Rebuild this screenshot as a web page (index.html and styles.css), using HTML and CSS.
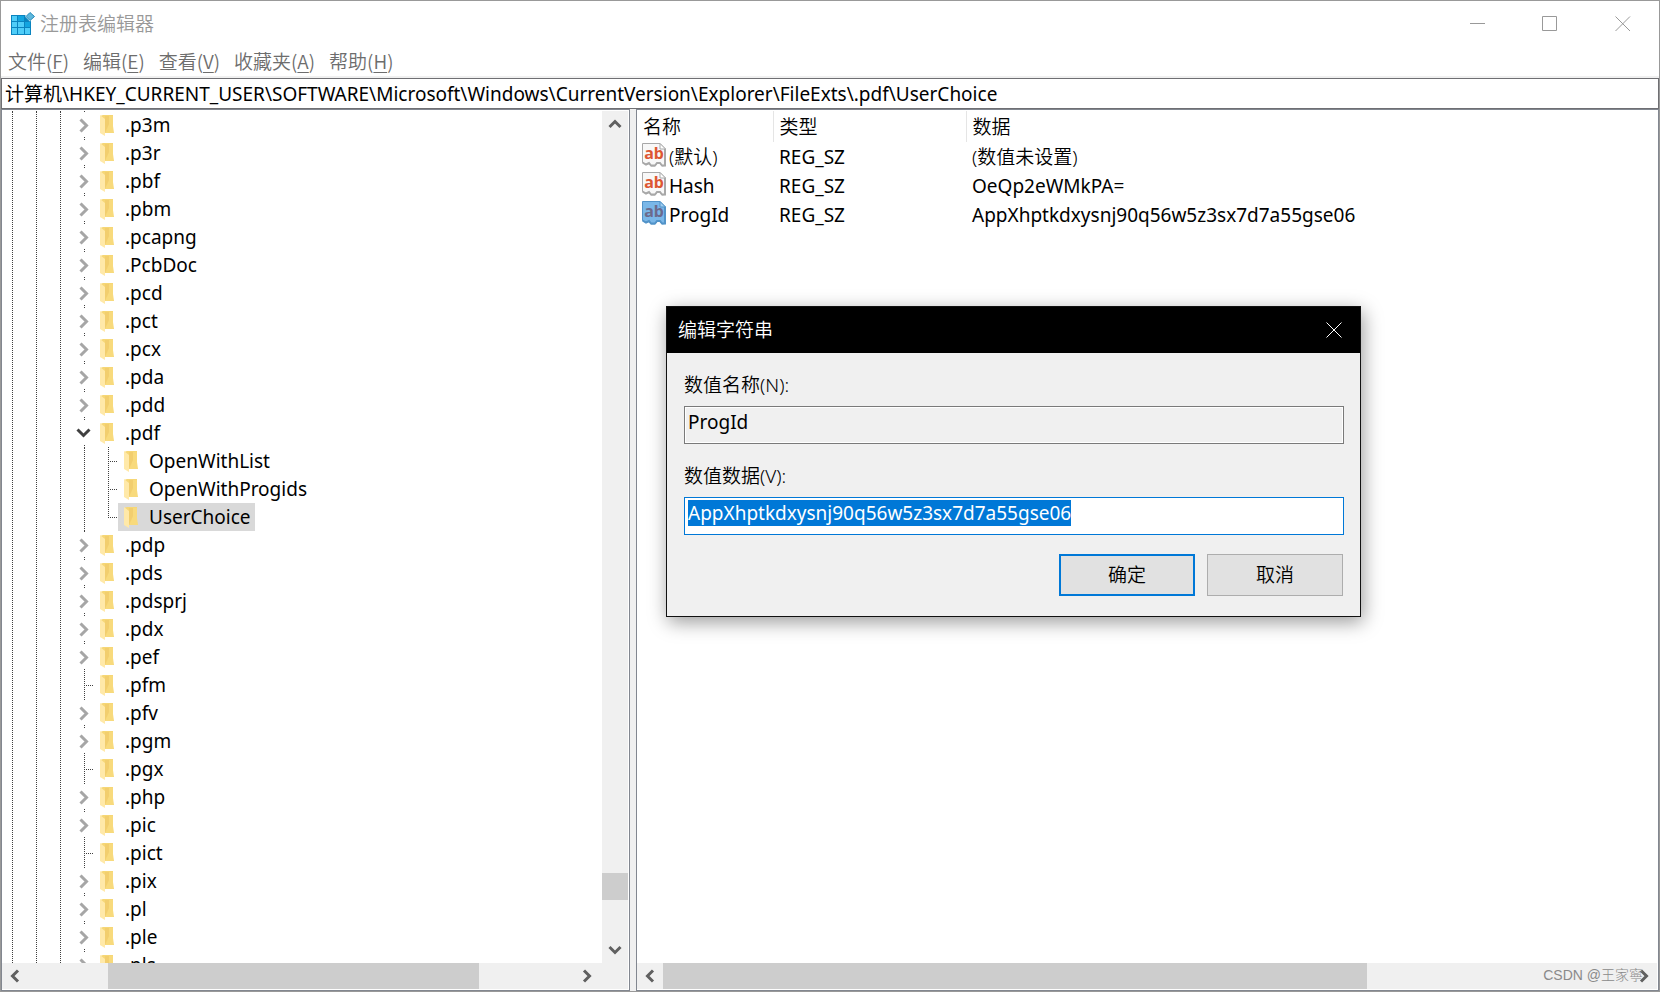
FILE: index.html
```html
<!DOCTYPE html>
<html lang="zh-CN">
<head>
<meta charset="utf-8">
<title>注册表编辑器</title>
<link rel="stylesheet" href="styles.css">
</head>
<body>
<svg class="defs" aria-hidden="true">
  <symbol id="folder" viewBox="0 0 14 22">
    <path d="M3 0H13V17L14 18H4L0 15V1Z" fill="#f6d776"/>
    <path d="M5 1H13V11L14 18H5Z" fill="#f8da7c"/>
    <path d="M5 1V18L9 9V1Z" fill="#eec765" opacity=".6"/>
    <path d="M0 0L5 4V21L0 18Z" fill="#ffe9a9"/>
  </symbol>
  <symbol id="closed" viewBox="0 0 22 28">
    <path d="M12.500 0V1M12.500 26V27" class="dots"/>
    <path d="M8.500 8.500L14.500 14.500L8.500 20.500" fill="none" stroke="#a6a6a6" stroke-width="3"/>
  </symbol>
  <symbol id="open" viewBox="0 0 22 28">
    <path d="M12.500 0V1M12.500 26V27" class="dots"/>
    <path d="M5.500 10.500L11.500 16.500L17.500 10.500" fill="none" stroke="#404040" stroke-width="3"/>
  </symbol>
  <symbol id="leaf" viewBox="0 0 22 28"><path d="M12.500 0V28M12 14.500H22" class="dots"/></symbol>
  <symbol id="last" viewBox="0 0 22 28"><path d="M12.500 0V15M12 14.500H22" class="dots"/></symbol>
  <symbol id="string" viewBox="0 0 24 24">
    <path class="sheet" d="M.5 .5H18L23.500 6V22.500L20 23L18 20.500H15L13 23H9L7 20.500L4 21.500L.5 19.500Z"/>
    <path class="edge" d="M.5 19.500L4 21.500L7 20L9 22.500H13L15 20H18L20 22.500H23V6"/>
    <path class="fold" d="M18 .5V6H23.500Z"/>
  </symbol>
  <symbol id="arrow" viewBox="0 0 26 26"><path d="M16 7.500L10.500 13L16 18.500" fill="none" stroke="#606060" stroke-width="3"/></symbol>
</svg>
<div class="window">
  <header class="titlebar">
    <svg class="app-icon" viewBox="0 0 24 24" aria-hidden="true">
      <path d="M0 3H14L20 9V23H0Z" fill="#0a84bf"/>
      <path d="M1 4H6V9H1ZM1 10H6V15H1ZM1 16H6V22H1ZM7 16H13V22H7ZM14 16H19V22H14ZM7 10H13V15H7Z" fill="#4fcdf8"/>
      <path d="M7 4H13V9H7ZM14 10H19V15H14Z" fill="#12a5e0"/>
      <path d="M19 -.5L24 4.500L19 9.500L14 4.500Z" fill="#fff"/>
      <path d="M19 .5L23.500 4.500L19 8.500L15 4.500Z" fill="#5fb8dd" stroke="#2389b9"/>
    </svg>
    <h1>注册表编辑器</h1>
    <div class="caption-buttons">
      <button aria-label="最小化"><svg viewBox="0 0 16 16"><path d="M1 7.500H16"/></svg></button>
      <button aria-label="最大化"><svg viewBox="0 0 16 16"><path d="M.5 .5H14.500V14.500H.5Z"/></svg></button>
      <button aria-label="关闭"><svg viewBox="0 0 16 16"><path d="M.5 .5L15 15M15 .5L.5 15"/></svg></button>
    </div>
  </header>
  <nav class="menu">
    <button>文件(<u>F</u>)</button><button>编辑(<u>E</u>)</button><button>查看(<u>V</u>)</button><button>收藏夹(<u>A</u>)</button><button>帮助(<u>H</u>)</button>
  </nav>
  <input class="address" aria-label="地址" value="计算机\HKEY_CURRENT_USER\SOFTWARE\Microsoft\Windows\CurrentVersion\Explorer\FileExts\.pdf\UserChoice">
  <main class="panes">
    <section class="pane tree-pane">
      <div class="tree-area">
        <div class="tree">
          <div class="guide"></div><div class="guide"></div><div class="guide half"></div>
          <ul>
            <li><svg class="toggle"><use href="#closed"/></svg><span class="item"><svg class="folder"><use href="#folder"/></svg>.p3m</span></li>
            <li><svg class="toggle"><use href="#closed"/></svg><span class="item"><svg class="folder"><use href="#folder"/></svg>.p3r</span></li>
            <li><svg class="toggle"><use href="#closed"/></svg><span class="item"><svg class="folder"><use href="#folder"/></svg>.pbf</span></li>
            <li><svg class="toggle"><use href="#closed"/></svg><span class="item"><svg class="folder"><use href="#folder"/></svg>.pbm</span></li>
            <li><svg class="toggle"><use href="#closed"/></svg><span class="item"><svg class="folder"><use href="#folder"/></svg>.pcapng</span></li>
            <li><svg class="toggle"><use href="#closed"/></svg><span class="item"><svg class="folder"><use href="#folder"/></svg>.PcbDoc</span></li>
            <li><svg class="toggle"><use href="#closed"/></svg><span class="item"><svg class="folder"><use href="#folder"/></svg>.pcd</span></li>
            <li><svg class="toggle"><use href="#closed"/></svg><span class="item"><svg class="folder"><use href="#folder"/></svg>.pct</span></li>
            <li><svg class="toggle"><use href="#closed"/></svg><span class="item"><svg class="folder"><use href="#folder"/></svg>.pcx</span></li>
            <li><svg class="toggle"><use href="#closed"/></svg><span class="item"><svg class="folder"><use href="#folder"/></svg>.pda</span></li>
            <li><svg class="toggle"><use href="#closed"/></svg><span class="item"><svg class="folder"><use href="#folder"/></svg>.pdd</span></li>
            <li><svg class="toggle"><use href="#open"/></svg><span class="item"><svg class="folder"><use href="#folder"/></svg>.pdf</span>
              <div class="children"><div class="guide"></div>
                <ul>
                  <li><svg class="toggle"><use href="#leaf"/></svg><span class="item"><svg class="folder"><use href="#folder"/></svg>OpenWithList</span></li>
                  <li><svg class="toggle"><use href="#leaf"/></svg><span class="item"><svg class="folder"><use href="#folder"/></svg>OpenWithProgids</span></li>
                  <li><svg class="toggle"><use href="#last"/></svg><span class="item selected"><svg class="folder"><use href="#folder"/></svg>UserChoice</span></li>
                </ul>
              </div>
            </li>
            <li><svg class="toggle"><use href="#closed"/></svg><span class="item"><svg class="folder"><use href="#folder"/></svg>.pdp</span></li>
            <li><svg class="toggle"><use href="#closed"/></svg><span class="item"><svg class="folder"><use href="#folder"/></svg>.pds</span></li>
            <li><svg class="toggle"><use href="#closed"/></svg><span class="item"><svg class="folder"><use href="#folder"/></svg>.pdsprj</span></li>
            <li><svg class="toggle"><use href="#closed"/></svg><span class="item"><svg class="folder"><use href="#folder"/></svg>.pdx</span></li>
            <li><svg class="toggle"><use href="#closed"/></svg><span class="item"><svg class="folder"><use href="#folder"/></svg>.pef</span></li>
            <li><svg class="toggle"><use href="#leaf"/></svg><span class="item"><svg class="folder"><use href="#folder"/></svg>.pfm</span></li>
            <li><svg class="toggle"><use href="#closed"/></svg><span class="item"><svg class="folder"><use href="#folder"/></svg>.pfv</span></li>
            <li><svg class="toggle"><use href="#closed"/></svg><span class="item"><svg class="folder"><use href="#folder"/></svg>.pgm</span></li>
            <li><svg class="toggle"><use href="#leaf"/></svg><span class="item"><svg class="folder"><use href="#folder"/></svg>.pgx</span></li>
            <li><svg class="toggle"><use href="#closed"/></svg><span class="item"><svg class="folder"><use href="#folder"/></svg>.php</span></li>
            <li><svg class="toggle"><use href="#closed"/></svg><span class="item"><svg class="folder"><use href="#folder"/></svg>.pic</span></li>
            <li><svg class="toggle"><use href="#leaf"/></svg><span class="item"><svg class="folder"><use href="#folder"/></svg>.pict</span></li>
            <li><svg class="toggle"><use href="#closed"/></svg><span class="item"><svg class="folder"><use href="#folder"/></svg>.pix</span></li>
            <li><svg class="toggle"><use href="#closed"/></svg><span class="item"><svg class="folder"><use href="#folder"/></svg>.pl</span></li>
            <li><svg class="toggle"><use href="#closed"/></svg><span class="item"><svg class="folder"><use href="#folder"/></svg>.ple</span></li>
            <li><svg class="toggle"><use href="#closed"/></svg><span class="item"><svg class="folder"><use href="#folder"/></svg>.pls</span></li>
          </ul>
        </div>
        <div class="scroll vertical">
          <button aria-label="向上滚动"><svg class="up"><use href="#arrow"/></svg></button>
          <div class="track tree-v"><i></i><b></b><i></i></div>
          <button aria-label="向下滚动"><svg class="down"><use href="#arrow"/></svg></button>
        </div>
      </div>
      <div class="scroll horizontal with-corner">
        <button aria-label="向左滚动"><svg><use href="#arrow"/></svg></button>
        <div class="track tree-h"><i></i><b></b><i></i></div>
        <button aria-label="向右滚动"><svg class="right"><use href="#arrow"/></svg></button>
      </div>
    </section>
    <section class="pane list-pane">
      <table class="values">
        <colgroup><col class="c-name"><col class="c-type"><col></colgroup>
        <thead><tr><th>名称</th><th>类型</th><th>数据</th></tr></thead>
        <tbody>
          <tr><td class="thin"><span class="value"><span class="value-icon"><svg><use href="#string"/></svg><span>ab</span></span>(默认)</span></td><td>REG_SZ</td><td class="thin">(数值未设置)</td></tr>
          <tr><td><span class="value"><span class="value-icon"><svg><use href="#string"/></svg><span>ab</span></span>Hash</span></td><td>REG_SZ</td><td>OeQp2eWMkPA=</td></tr>
          <tr><td><span class="value"><span class="value-icon picked"><svg><use href="#string"/></svg><span>ab</span></span>ProgId</span></td><td>REG_SZ</td><td>AppXhptkdxysnj90q56w5z3sx7d7a55gse06</td></tr>
        </tbody>
      </table>
      <div class="scroll horizontal">
        <button aria-label="向左滚动"><svg><use href="#arrow"/></svg></button>
        <div class="track list-h"><b></b><i></i></div>
        <button aria-label="向右滚动"><svg class="right"><use href="#arrow"/></svg></button>
      </div>
    </section>
  </main>
</div>
<form class="dialog" role="dialog" aria-labelledby="dialog-title">
  <header class="dialog-title">
    <h2 id="dialog-title">编辑字符串</h2>
    <button type="button" aria-label="关闭"><svg viewBox="0 0 16 16"><path d="M.5 .5L15.500 15.500M15.500 .5L.5 15.500"/></svg></button>
  </header>
  <div class="dialog-body">
    <label for="value-name">数值名称(N):</label>
    <input id="value-name" class="readonly" value="ProgId" readonly>
    <label for="value-data">数值数据(V):</label>
    <input id="value-data" value="AppXhptkdxysnj90q56w5z3sx7d7a55gse06" spellcheck="false">
    <div class="actions"><button type="button" class="default">确定</button><button type="button">取消</button></div>
  </div>
</form>
<div class="watermark">CSDN @王家寧</div>
<script src="main.js"></script>
</body>
</html>
```
FILE: main.js
```js
const field = document.getElementById('value-data');
field.focus();
field.select();
```
FILE: styles.css
```css
* { box-sizing: border-box; }
body {
  margin: 0;
  background: #fff;
  color: #000;
  font-family: "Noto Sans", "Noto Sans CJK SC", sans-serif;
  font-size: 19px;
  line-height: 28px;
}
button, input { font: inherit; color: inherit; margin: 0; border-radius: 0; outline: none; }
button { background: none; border: 0; padding: 0; }
h1, h2 { margin: 0; font-size: 19px; font-weight: 350; }
ul { list-style: none; margin: 0; padding: 0; }
svg { display: block; }
.defs { position: absolute; width: 0; height: 0; }

.window {
  height: 100vh;
  display: flex;
  flex-direction: column;
  border: 1px solid #999;
  overflow: hidden;
}
.titlebar { display: flex; align-items: center; height: 46px; padding-left: 10px; color: #999; }
.app-icon { width: 24px; height: 24px; margin-right: 5px; }
.caption-buttons { margin-left: auto; display: flex; }
.caption-buttons button { width: 73px; height: 46px; display: grid; place-items: center; }
.caption-buttons svg, .dialog-title svg { width: 16px; height: 16px; fill: none; stroke: #999; }
.menu { display: flex; align-items: flex-start; gap: 14px; height: 31px; padding-left: 7px; color: #6d6d6d; border-bottom: 2px solid #f0f0f0; font-family: "Noto Sans CJK SC", sans-serif; font-weight: 350; }
.menu u { text-underline-offset: 3px; text-decoration-thickness: 1px; }
.address { width: 100%; height: 31px; flex: none; border: 1px solid #6f6f73; padding: 0 3px 2px; background: #fff; }

.panes { flex: 1; min-height: 0; display: flex; gap: 6px; background: #f0f0f0; }
.pane { display: flex; flex-direction: column; background: #fff; border: 1px solid #828790; min-width: 0; padding: 1px 1px 1px 0; }
.tree-pane { width: calc(38% - 1px); flex: none; }
.list-pane { flex: 1; }
.tree-area { flex: 1; min-height: 0; display: flex; }
.tree { flex: 1; overflow: hidden; display: flex; align-items: flex-start; padding-left: 10px; }
.guide { width: 24px; align-self: stretch; border-left: 1px dotted #404040; }
.guide.half { width: 12px; }
.tree li { display: flex; flex-wrap: wrap; }
.toggle { width: 22px; height: 28px; }
.dots { stroke: #404040; fill: none; stroke-dasharray: 1 1; shape-rendering: crispEdges; }
.item { display: flex; gap: 11px; padding: 0 4px 0 6px; height: 28px; }
.item.selected { background: #d9d9d9; }
.folder { width: 14px; height: 22px; margin-top: 4px; }
.children { width: 100%; display: flex; padding-left: 12px; }
.children > .guide { width: 12px; }

.scroll { display: flex; flex: none; background: #f0f0f0; }
.scroll svg { width: 26px; height: 26px; }
.scroll.vertical { flex-direction: column; width: 26px; }
.scroll.horizontal { height: 26px; }
.with-corner { padding-right: 28px; }
.right { transform: rotate(180deg); }
.up { transform: rotate(90deg); }
.down { transform: rotate(-90deg); }
.track { flex: 1; display: flex; }
.vertical .track { flex-direction: column; }
.track i { flex: 1; }
.track b { background: #cdcdcd; }
.tree-v i:first-child { flex: 0 0 92%; }
.tree-v b { height: 27px; }
.tree-h i:first-child { flex: 0 0 14.700%; }
.tree-h b { width: 67.900%; }
.list-h b { width: 72.700%; }

.values { width: 100%; table-layout: fixed; border-collapse: collapse; margin-bottom: auto; }
.c-name { width: 136px; }
.c-type { width: 193px; }
.values th { height: 31px; padding: 0 0 0 6px; text-align: left; font-weight: 350; border-right: 1px solid #e5e5e5; }
.values th:last-child { border-right: 0; }
.values td { height: 29px; padding: 0 0 0 6px; white-space: nowrap; }
.values td:first-child { padding-left: 5px; }
.thin { font-weight: 350; }
.value { display: flex; gap: 3px; height: 29px; padding-top: 1px; }
.value-icon { display: grid; width: 24px; height: 24px; }
.value-icon svg, .value-icon > span { grid-area: 1 / 1; width: 24px; height: 24px; }
.value-icon > span { color: #dd5733; font: bold 16px/20px "Noto Sans", sans-serif; text-align: center; z-index: 1; }
.value-icon { --sheet: #f8f8f8; --edge: #a8a8a8; --fold: #fff; }
.sheet { fill: var(--sheet); stroke: var(--edge); }
.edge { fill: none; stroke: var(--edge); stroke-width: 2; }
.fold { fill: var(--fold); stroke: var(--edge); }
.picked { --sheet: #7ab7e8; --edge: #5293c8; --fold: #a0cdf0; }
.picked > span { color: #6c6a8c; }

.dialog {
  position: absolute;
  left: 666px;
  top: 306px;
  width: 695px;
  background: #f0f0f0;
  border: 1px solid #111;
  box-shadow: 2px 5px 18px rgba(0, 0, 0, .4);
}
.dialog-title { display: flex; align-items: center; height: 46px; padding-left: 11px; background: #000; color: #fff; }
.dialog-title button { margin-left: auto; width: 52px; height: 46px; display: grid; place-items: center; }
.dialog-title svg { stroke: #fff; }
.dialog-body { display: flex; flex-direction: column; padding: 18px 16px 20px 17px; }
.dialog-body label { font-weight: 350; margin-bottom: 7px; }
.dialog-body input { height: 38px; margin-bottom: 18px; padding: 2px 3px 9px; border: 1px solid #0078d7; background: #fff; line-height: 25px; }
.dialog-body input.readonly { border-color: #7a7a7a; background: #f0f0f0; box-shadow: inset 0 0 0 1px #fff; }
.dialog-body input::selection { background: #0078d7; color: #fff; }
.actions { display: flex; justify-content: flex-end; gap: 12px; padding: 1px 1px 0 0; }
.actions button { width: 136px; height: 42px; background: #e1e1e1; border: 1px solid #adadad; font-weight: 350; }
.actions .default { border: 2px solid #0078d7; }
.watermark { position: absolute; right: 17px; bottom: 6px; color: #8a8a8a; font: 300 14px/22px "Liberation Sans", "Noto Sans CJK SC", sans-serif; pointer-events: none; }
```
